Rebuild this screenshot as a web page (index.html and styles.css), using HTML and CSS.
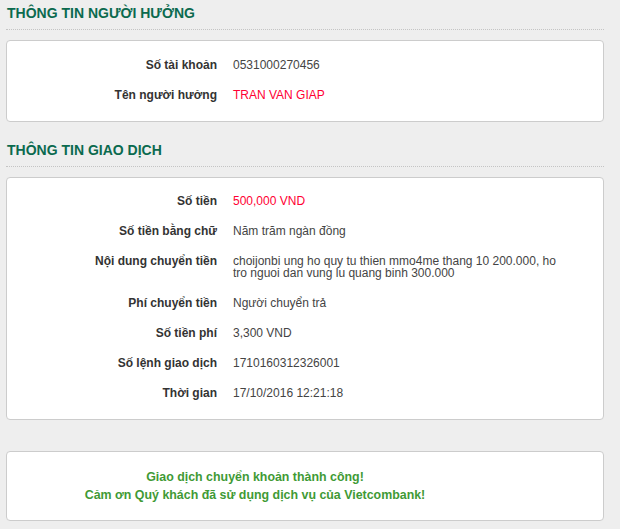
FILE: index.html
```html
<!DOCTYPE html>
<html lang="vi">
<head>
<meta charset="utf-8">
<title>Vietcombank</title>
<link rel="stylesheet" href="styles.css">
</head>
<body>
<div class="page">
  <h2 class="section-title">THÔNG TIN NGƯỜI HƯỞNG</h2>
  <div class="card">
    <div class="row"><div class="label">Số tài khoản</div><div class="value">0531000270456</div></div>
    <div class="row"><div class="label">Tên người hưởng</div><div class="value red">TRAN VAN GIAP</div></div>
  </div>

  <h2 class="section-title">THÔNG TIN GIAO DỊCH</h2>
  <div class="card card-tx">
    <div class="row"><div class="label">Số tiền</div><div class="value red">500,000 VND</div></div>
    <div class="row"><div class="label">Số tiền bằng chữ</div><div class="value">Năm trăm ngàn đồng</div></div>
    <div class="row"><div class="label">Nội dung chuyển tiền</div><div class="value">choijonbi ung ho quy tu thien mmo4me thang 10 200.000, ho tro nguoi dan vung lu quang binh 300.000</div></div>
    <div class="row"><div class="label">Phí chuyển tiền</div><div class="value">Người chuyển trả</div></div>
    <div class="row"><div class="label">Số tiền phí</div><div class="value">3,300 VND</div></div>
    <div class="row"><div class="label">Số lệnh giao dịch</div><div class="value">1710160312326001</div></div>
    <div class="row"><div class="label">Thời gian</div><div class="value">17/10/2016 12:21:18</div></div>
  </div>

  <div class="card message">
    <p>Giao dịch chuyển khoản thành công!<br>Cảm ơn Quý khách đã sử dụng dịch vụ của Vietcombank!</p>
  </div>
</div>
</body>
</html>
```

FILE: styles.css
```css
html, body {
  margin: 0;
  padding: 0;
  background: #eeeeee;
}
body {
  font-family: "Liberation Sans", Arial, sans-serif;
  font-size: 12px;
  color: #333333;
}
.page {
  width: 598px;
  padding: 0 0 0 6px;
}
.section-title {
  margin: 0;
  padding: 5px 0 0 1px;
  height: 30px;
  box-sizing: border-box;
  font-size: 14px;
  line-height: 16px;
  font-weight: bold;
  color: #0b6a4e;
  border-bottom: 1px dotted #c4c4c4;
}
.card {
  background: #ffffff;
  border: 1px solid #cccccc;
  border-radius: 4px;
  margin-top: 10px;
  padding: 9px 0 11px;
  margin-bottom: 15px;
}
.card-tx {
  padding: 8px 0 11px;
}
.row {
  display: grid;
  grid-template-columns: 210px 340px;
  column-gap: 16px;
  padding: 9px 0;
  line-height: 12px;
}
.label {
  text-align: right;
  font-weight: bold;
  color: #333333;
}
.value {
  color: #444444;
}
.red {
  color: #ff0033;
}
.message {
  margin-top: 31px;
  padding: 16px 100px 16px 0;
  text-align: center;
}
.message p {
  margin: 0;
  font-size: 12.4px;
  line-height: 18px;
  font-weight: bold;
  color: #3f9a35;
}
```
